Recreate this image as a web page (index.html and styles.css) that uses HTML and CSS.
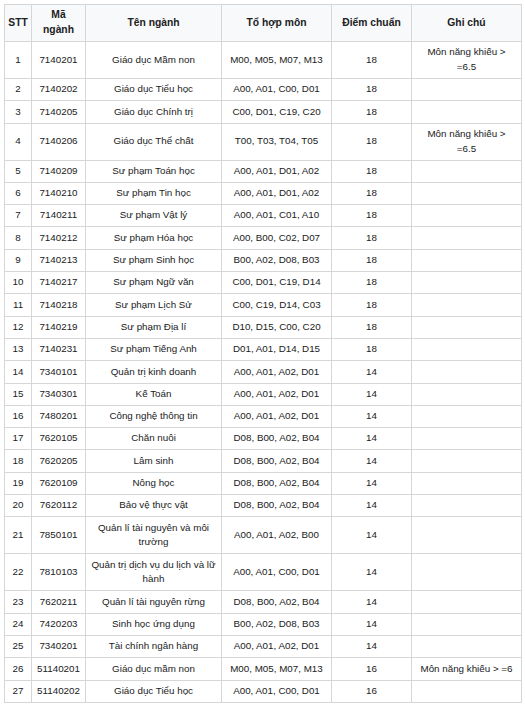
FILE: index.html
```html
<!DOCTYPE html>
<html lang="vi">
<head>
<meta charset="utf-8">
<title>Điểm chuẩn</title>
<link rel="stylesheet" href="styles.css">
</head>
<body>
<div class="wrap">
<table class="scores">
<colgroup>
<col class="c-stt"><col class="c-ma"><col class="c-ten"><col class="c-to"><col class="c-diem"><col class="c-ghi">
</colgroup>
<thead>
<tr><th>STT</th><th>Mã ngành</th><th>Tên ngành</th><th>Tổ hợp môn</th><th>Điểm chuẩn</th><th>Ghi chú</th></tr>
</thead>
<tbody>
<tr><td>1</td><td>7140201</td><td>Giáo dục Mầm non</td><td>M00, M05, M07, M13</td><td>18</td><td class="note">Môn năng khiếu &gt; =6.5</td></tr>
<tr><td>2</td><td>7140202</td><td>Giáo dục Tiểu học</td><td>A00, A01, C00, D01</td><td>18</td><td></td></tr>
<tr><td>3</td><td>7140205</td><td>Giáo dục Chính trị</td><td>C00, D01, C19, C20</td><td>18</td><td></td></tr>
<tr><td>4</td><td>7140206</td><td>Giáo dục Thể chất</td><td>T00, T03, T04, T05</td><td>18</td><td class="note">Môn năng khiếu &gt; =6.5</td></tr>
<tr><td>5</td><td>7140209</td><td>Sư phạm Toán học</td><td>A00, A01, D01, A02</td><td>18</td><td></td></tr>
<tr><td>6</td><td>7140210</td><td>Sư phạm Tin học</td><td>A00, A01, D01, A02</td><td>18</td><td></td></tr>
<tr><td>7</td><td>7140211</td><td>Sư phạm Vật lý</td><td>A00, A01, C01, A10</td><td>18</td><td></td></tr>
<tr><td>8</td><td>7140212</td><td>Sư phạm Hóa học</td><td>A00, B00, C02, D07</td><td>18</td><td></td></tr>
<tr><td>9</td><td>7140213</td><td>Sư phạm Sinh học</td><td>B00, A02, D08, B03</td><td>18</td><td></td></tr>
<tr><td>10</td><td>7140217</td><td>Sư phạm Ngữ văn</td><td>C00, D01, C19, D14</td><td>18</td><td></td></tr>
<tr><td>11</td><td>7140218</td><td>Sư phạm Lịch Sử</td><td>C00, C19, D14, C03</td><td>18</td><td></td></tr>
<tr><td>12</td><td>7140219</td><td>Sư phạm Địa lí</td><td>D10, D15, C00, C20</td><td>18</td><td></td></tr>
<tr><td>13</td><td>7140231</td><td>Sư phạm Tiếng Anh</td><td>D01, A01, D14, D15</td><td>18</td><td></td></tr>
<tr><td>14</td><td>7340101</td><td>Quản trị kinh doanh</td><td>A00, A01, A02, D01</td><td>14</td><td></td></tr>
<tr><td>15</td><td>7340301</td><td>Kế Toán</td><td>A00, A01, A02, D01</td><td>14</td><td></td></tr>
<tr><td>16</td><td>7480201</td><td>Công nghệ thông tin</td><td>A00, A01, A02, D01</td><td>14</td><td></td></tr>
<tr><td>17</td><td>7620105</td><td>Chăn nuôi</td><td>D08, B00, A02, B04</td><td>14</td><td></td></tr>
<tr><td>18</td><td>7620205</td><td>Lâm sinh</td><td>D08, B00, A02, B04</td><td>14</td><td></td></tr>
<tr><td>19</td><td>7620109</td><td>Nông học</td><td>D08, B00, A02, B04</td><td>14</td><td></td></tr>
<tr><td>20</td><td>7620112</td><td>Bảo vệ thực vật</td><td>D08, B00, A02, B04</td><td>14</td><td></td></tr>
<tr><td>21</td><td>7850101</td><td class="name2">Quản lí tài nguyên và môi trường</td><td>A00, A01, A02, B00</td><td>14</td><td></td></tr>
<tr><td>22</td><td>7810103</td><td class="name2">Quản trị dịch vụ du lịch và lữ hành</td><td>A00, A01, C00, D01</td><td>14</td><td></td></tr>
<tr><td>23</td><td>7620211</td><td>Quản lí tài nguyên rừng</td><td>D08, B00, A02, B04</td><td>14</td><td></td></tr>
<tr><td>24</td><td>7420203</td><td>Sinh học ứng dụng</td><td>B00, A02, D08, B03</td><td>14</td><td></td></tr>
<tr><td>25</td><td>7340201</td><td>Tài chính ngân hàng</td><td>A00, A01, A02, D01</td><td>14</td><td></td></tr>
<tr><td>26</td><td>51140201</td><td>Giáo dục mầm non</td><td>M00, M05, M07, M13</td><td>16</td><td class="one">Môn năng khiếu &gt; =6</td></tr>
<tr><td>27</td><td>51140202</td><td>Giáo dục Tiểu học</td><td>A00, A01, C00, D01</td><td>16</td><td></td></tr>
</tbody>
</table>
</div>
</body>
</html>
```
FILE: styles.css
```css
html, body {
  margin: 0;
  padding: 0;
  background: #ffffff;
}
.wrap {
  padding: 4px;
}
.scores {
  border-collapse: collapse;
  table-layout: fixed;
  width: 517px;
  font-family: "Liberation Sans", Arial, sans-serif;
  font-size: 9.8px;
  color: #202122;
  background: #f8f9fa;
}
.c-stt { width: 27px; }
.c-ma { width: 54px; }
.c-ten { width: 136px; }
.c-to { width: 110px; }
.c-diem { width: 80px; }
.c-ghi { width: 110px; }
.scores th,
.scores td {
  border: 1px solid #d4d6d8;
  text-align: center;
  vertical-align: middle;
  line-height: 14.7px;
  padding: 3.3px 3px;
}
.scores th {
  font-weight: bold;
  font-size: 10.3px;
  background: #f8f9fa;
}
.scores td {
  background: #ffffff;
}
.scores td.note {
  padding-left: 9px;
  padding-right: 9px;
}
.scores td.name2 {
  padding-left: 1px;
  padding-right: 1px;
}
.scores td.one {
  white-space: nowrap;
  padding-left: 2px;
  padding-right: 2px;
}
```
